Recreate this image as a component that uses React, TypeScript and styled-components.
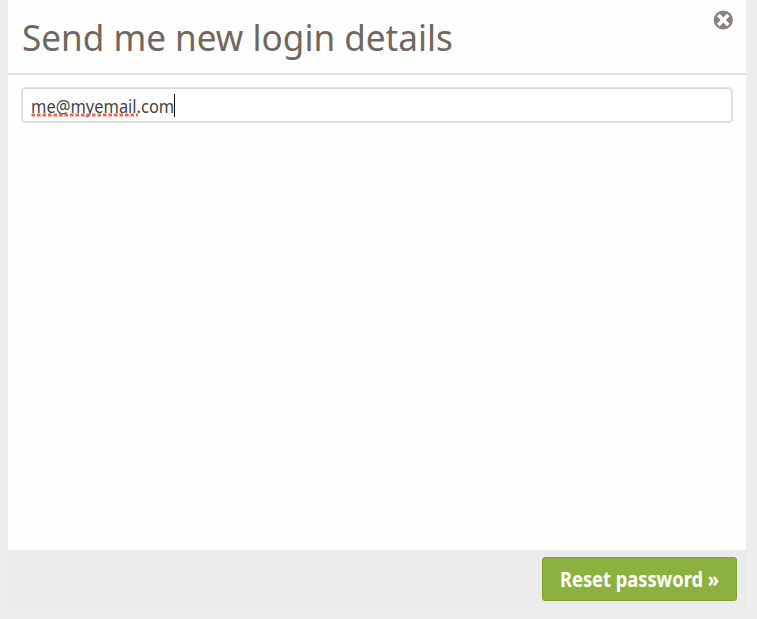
import React from "react";
import styled, { createGlobalStyle } from "styled-components";

const GlobalStyle = createGlobalStyle`
  * { box-sizing: border-box; }
  body { margin: 0; background: #eeeeec; font-family: "Noto Sans", "Open Sans", sans-serif; }
`;

const Page = styled.main`
  height: 619px;
  padding: 0 11px 11px 8px;
  overflow: hidden;
`;

const Dialog = styled.section`
  height: 608px;
  display: flex;
  flex-direction: column;
  background: #fefefe;
`;

const Header = styled.header`
  height: 75px;
  flex: none;
  display: flex;
  justify-content: space-between;
  align-items: flex-start;
  padding: 10px 13px 0 14px;
  border-bottom: 2px solid #e2e1dd;
`;

const Title = styled.h1`
  margin: 0;
  font-size: 37px;
  line-height: 54px;
  font-weight: 400;
  color: #70675f;
  white-space: nowrap;
  transform: scaleX(0.948);
  transform-origin: left;
`;

const CloseButton = styled.button`
  width: 20px;
  height: 20px;
  padding: 0;
  border: 0;
  background: none;
  svg { display: block; }
`;

const Body = styled.div`
  flex: 1;
  padding: 12px 13px;
`;

const Field = styled.div`
  height: 36px;
  display: flex;
  align-items: center;
  padding: 1px 9px 0;
  border: 1px solid #e2e2e2;
  border-radius: 4px;
  background: #fff;
  box-shadow: inset 0 0 0 1px #dadada;
`;

const FieldText = styled.span`
  position: relative;
  width: 143px;
  font-size: 18px;
  line-height: 24px;
  color: #454341;
  white-space: nowrap;
`;

const Condensed = styled.span`
  display: inline-block;
  transform: scaleX(0.914);
  transform-origin: left;
`;

const SpellingMark = styled.svg`
  position: absolute;
  left: 0;
  top: 19px;
`;

const Caret = styled.span`
  width: 1px;
  height: 23px;
  background: #111;
`;

const Footer = styled.footer`
  height: 58px;
  flex: none;
  display: flex;
  justify-content: flex-end;
  align-items: flex-start;
  padding: 7px 9px;
  background: #ebebeb;
`;

const SubmitButton = styled.button`
  width: 195px;
  height: 44px;
  padding: 0 0 1px 17px;
  border: 1px solid #7da32f;
  border-radius: 3px;
  background: #8db140;
  color: #fff;
  font-family: inherit;
  font-size: 20.5px;
  font-weight: 700;
  text-align: left;
  white-space: nowrap;
`;

const ButtonLabel = styled(Condensed)`
  transform: scaleX(0.892);
`;

export default function App() {
  return (
    <>
      <GlobalStyle />
      <Page>
        <Dialog>
          <Header>
            <Title>Send me new login details</Title>
            <CloseButton aria-label="Close">
              <svg width="20" height="20" viewBox="0 0 20 20">
                <circle cx="10.3" cy="10" r="9.6" fill="#89837b" />
                <path d="M6.6 6.3l7.4 7.4M14 6.3l-7.4 7.4" stroke="#fff" strokeWidth="3.7" strokeLinecap="square" />
              </svg>
            </CloseButton>
          </Header>
          <Body>
            <Field>
              <FieldText>
                <Condensed>me@myemail.com</Condensed>
                <SpellingMark width="107" height="4">
                  <path d="M0.5 2H107" stroke="#f0654e" strokeWidth="3" strokeDasharray="3.6 1.9" />
                </SpellingMark>
              </FieldText>
              <Caret />
            </Field>
          </Body>
          <Footer>
            <SubmitButton>
              <ButtonLabel>Reset password »</ButtonLabel>
            </SubmitButton>
          </Footer>
        </Dialog>
      </Page>
    </>
  );
}
